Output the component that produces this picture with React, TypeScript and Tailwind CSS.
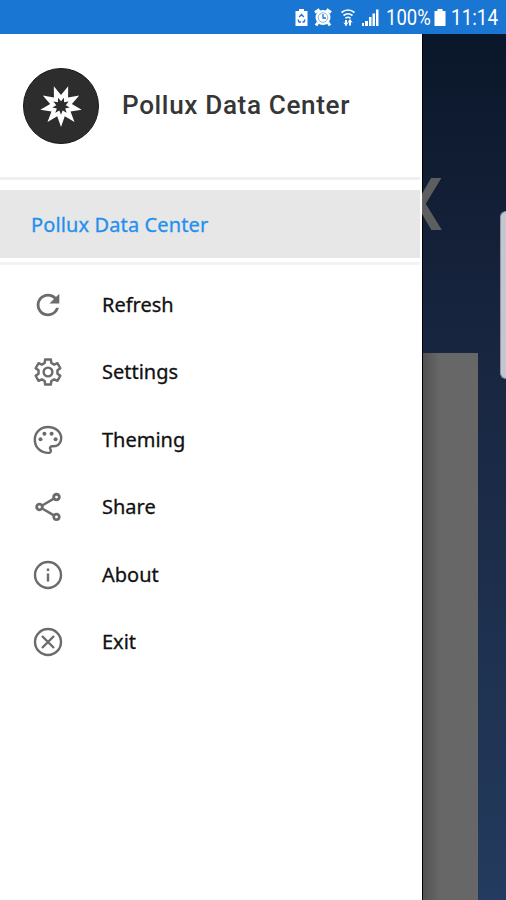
import type { ReactNode } from "react";
import { MdOutlineShare, MdRefresh } from "react-icons/md";

type IconProps = { size: number };

function OutlineIcon({ size, children }: IconProps & { children: ReactNode }) {
  return (
    <svg
      width={size}
      height={size}
      viewBox="-17 -17 34 34"
      fill="none"
      stroke="currentColor"
      strokeWidth="2.4"
      strokeLinejoin="round"
    >
      {children}
    </svg>
  );
}

const gearPoints = [0, 60, 120, 180, 240, 300]
  .flatMap((tooth) =>
    [
      [-20, 9.6],
      [-13, 12.9],
      [13, 12.9],
      [20, 9.6],
    ].map(([offset, r]) => {
      const angle = ((tooth + offset) * Math.PI) / 180;
      return `${(r * Math.sin(angle)).toFixed(2)},${(-r * Math.cos(angle)).toFixed(2)}`;
    }),
  )
  .join(" ");

function SettingsIcon({ size }: IconProps) {
  return (
    <OutlineIcon size={size}>
      <polygon points={gearPoints} />
      <circle r="4.4" />
    </OutlineIcon>
  );
}

function PaletteIcon({ size }: IconProps) {
  return (
    <OutlineIcon size={size}>
      <path d="M1.500 12.800C-7 13.500-13.200 7.500-13.200-.3C-13.200-7.500-7.500-13 0-13C7.500-13 13.200-8 13.200-1.800C13.200 3.500 9.500 6.500 5 6.300C2.500 6.100 1.300 7.500 2.300 9C3.300 10.500 3 12.400 1.500 12.800Z" />
      <g fill="currentColor" stroke="none">
        <circle cx="-7.500" cy="-.8" r="2" />
        <circle cx="-3.600" cy="-6.300" r="2" />
        <circle cx="3.600" cy="-6.300" r="2" />
        <circle cx="7.600" cy="-.8" r="2" />
      </g>
    </OutlineIcon>
  );
}

function InfoIcon({ size }: IconProps) {
  return (
    <OutlineIcon size={size}>
      <circle r="13" />
      <path d="M0-1.500V6.500M0-6.500V-4" />
    </OutlineIcon>
  );
}

function ExitIcon({ size }: IconProps) {
  return (
    <OutlineIcon size={size}>
      <circle r="13" />
      <path d="M-6-6L6 6M6-6L-6 6" />
    </OutlineIcon>
  );
}

const menuItems = [
  { label: "Refresh", icon: MdRefresh },
  { label: "Settings", icon: SettingsIcon },
  { label: "Theming", icon: PaletteIcon },
  { label: "Share", icon: MdOutlineShare },
  { label: "About", icon: InfoIcon },
  { label: "Exit", icon: ExitIcon },
];

function starPoints(center: number, outer: number, inner: number) {
  return Array.from({ length: 18 }, (_, i) => {
    const r = i % 2 === 0 ? outer : inner;
    const angle = Math.PI / 2 + (i * Math.PI) / 9;
    return `${center + r * Math.cos(angle)},${center + r * Math.sin(angle)}`;
  }).join(" ");
}

function Logo() {
  return (
    <svg className="ml-[23px] h-[76px] w-[76px] shrink-0" viewBox="0 0 76 76">
      <circle cx="38" cy="38" r="37.5" fill="#2d2d2d" stroke="#1a1a1a" />
      <polygon points={starPoints(38, 21, 11)} fill="#fff" />
      <polygon points={starPoints(38, 8.8, 4.8)} fill="#2d2d2d" />
    </svg>
  );
}

function StatusBar() {
  return (
    <header className="flex h-[34px] shrink-0 items-center bg-[#1976d2] pl-[295px] text-white">
      <svg className="h-[34px] w-[13px]" viewBox="0 0 13 34">
        <path d="M4 9h5v2h3.500v15H.500V11H4z" fill="#fff" />
        <path d="M4.200 17l2.300-2.500L8.800 17M3 19.500l1 2.500h2M10 19.500L9 22H7.500" fill="none" stroke="#1976d2" strokeWidth="1.300" />
      </svg>
      <svg className="ml-[6px] h-[34px] w-[18px]" viewBox="0 0 18 34">
        <circle cx="9" cy="17.5" r="7.500" fill="#fff" />
        <path d="M1 12.500l4.500-3M17 12.500l-4.500-3M4 22.500l-2 3M14 22.500l2 3" stroke="#fff" strokeWidth="3" />
        <circle cx="9" cy="17.5" r="4.800" fill="none" stroke="#1976d2" strokeWidth="0.500" />
        <path d="M9 14v4h3" fill="none" stroke="#1976d2" strokeWidth="1.300" />
      </svg>
      <svg className="ml-[8px] h-[34px] w-[16px]" viewBox="0 0 16 34" fill="none" stroke="#fff">
        <path d="M1.500 12.500Q8 7.500 14.500 12.500M3.500 15.500Q8 12 12.500 15.500M5.500 18.200Q8 16.300 10.500 18.200" strokeWidth="1.700" />
        <path d="M6 20v5.500M10 20v5.500" strokeWidth="2" />
        <path d="M4 22.500l2 3 2-3M8 22.500l2-3 2 3" strokeWidth="1" />
      </svg>
      <svg className="ml-[5px] h-[34px] w-[18px]" viewBox="0 0 18 34" fill="#fff">
        <path d="M1 23h2v3H1zM4 21h3v5H4zM8 17h2.500v9H8zM11.500 13.500h2.500v12.500h-2.500zM15 9.500h2.500v16.500h-2.500z" />
      </svg>
      <span className="ml-[7px] mt-[2px] w-[44px] origin-left scale-x-[0.86] whitespace-nowrap font-['Roboto',sans-serif] text-[21.500px] leading-none">
        100%
      </span>
      <svg className="ml-[4px] h-[34px] w-[12px]" viewBox="0 0 12 34">
        <path d="M3.500 9h5v2H11.500v15H.500V11h3z" fill="#fff" />
      </svg>
      <span className="ml-[5px] mt-[2px] origin-left scale-x-[0.88] whitespace-nowrap font-['Roboto',sans-serif] text-[21.500px] leading-none">11:14</span>
    </header>
  );
}

function Drawer() {
  return (
    <aside className="z-10 w-[422px] shrink-0 bg-white">
      <div className="flex h-[143px] items-center">
        <Logo />
        <h1 className="ml-[23px] origin-left scale-x-[1.045] whitespace-nowrap font-['Roboto',sans-serif] text-[25px] font-medium tracking-[0.600px] text-[#363636]">
          Pollux Data Center
        </h1>
      </div>
      <div className="mr-[2px] h-[3px] bg-[#f0f0f0]" />
      <div className="mr-[2px] mt-[10px] flex h-[68px] items-center bg-[#e7e7e7] pl-[31px] pt-[2px] font-['Noto_Sans',sans-serif] text-[20px] tracking-[0.120px] text-[#2490ed] [-webkit-text-stroke:0.300px_#2490ed]">
        Pollux Data Center
      </div>
      <div className="mr-[2px] mt-[4px] h-[3px] bg-[#f3f3f3]" />
      <nav className="mt-[6px]">
        {menuItems.map(({ label, icon: Icon }) => (
          <a key={label} className="flex h-[67.500px] items-center pl-[31px] text-[#6b6b6b]">
            <Icon size={34} />
            <span className="ml-[37px] font-['Noto_Sans',sans-serif] text-[20px] text-[#111] [-webkit-text-stroke:0.300px_#111]">{label}</span>
          </a>
        ))}
      </nav>
    </aside>
  );
}

export default function App() {
  return (
    <div className="flex h-[900px] w-[506px] flex-col overflow-hidden">
      <StatusBar />
      <main className="relative flex min-h-0 flex-1 bg-linear-to-b from-[#0a172a] via-[#18253f] via-35% to-[#233b5e]">
        <Drawer />
        <div className="flex flex-1 flex-col border-l border-black">
          <div className="h-[319px] shrink-0 pt-[135px]">
            <span className="-ml-[26px] block font-['Roboto',sans-serif] text-[73px] font-medium leading-[73px] text-[#5d5e60]">X</span>
          </div>
          <div className="mr-[28px] flex-1 bg-linear-to-r from-[#525252] to-[#666766] to-30%" />
        </div>
        {/* edge panel handle */}
        <div className="absolute right-0 top-[177px] h-[168px] w-[6px] rounded-l-[6px] border border-r-0 border-[#8d93a5] bg-[#c3c5cf]" />
      </main>
    </div>
  );
}
